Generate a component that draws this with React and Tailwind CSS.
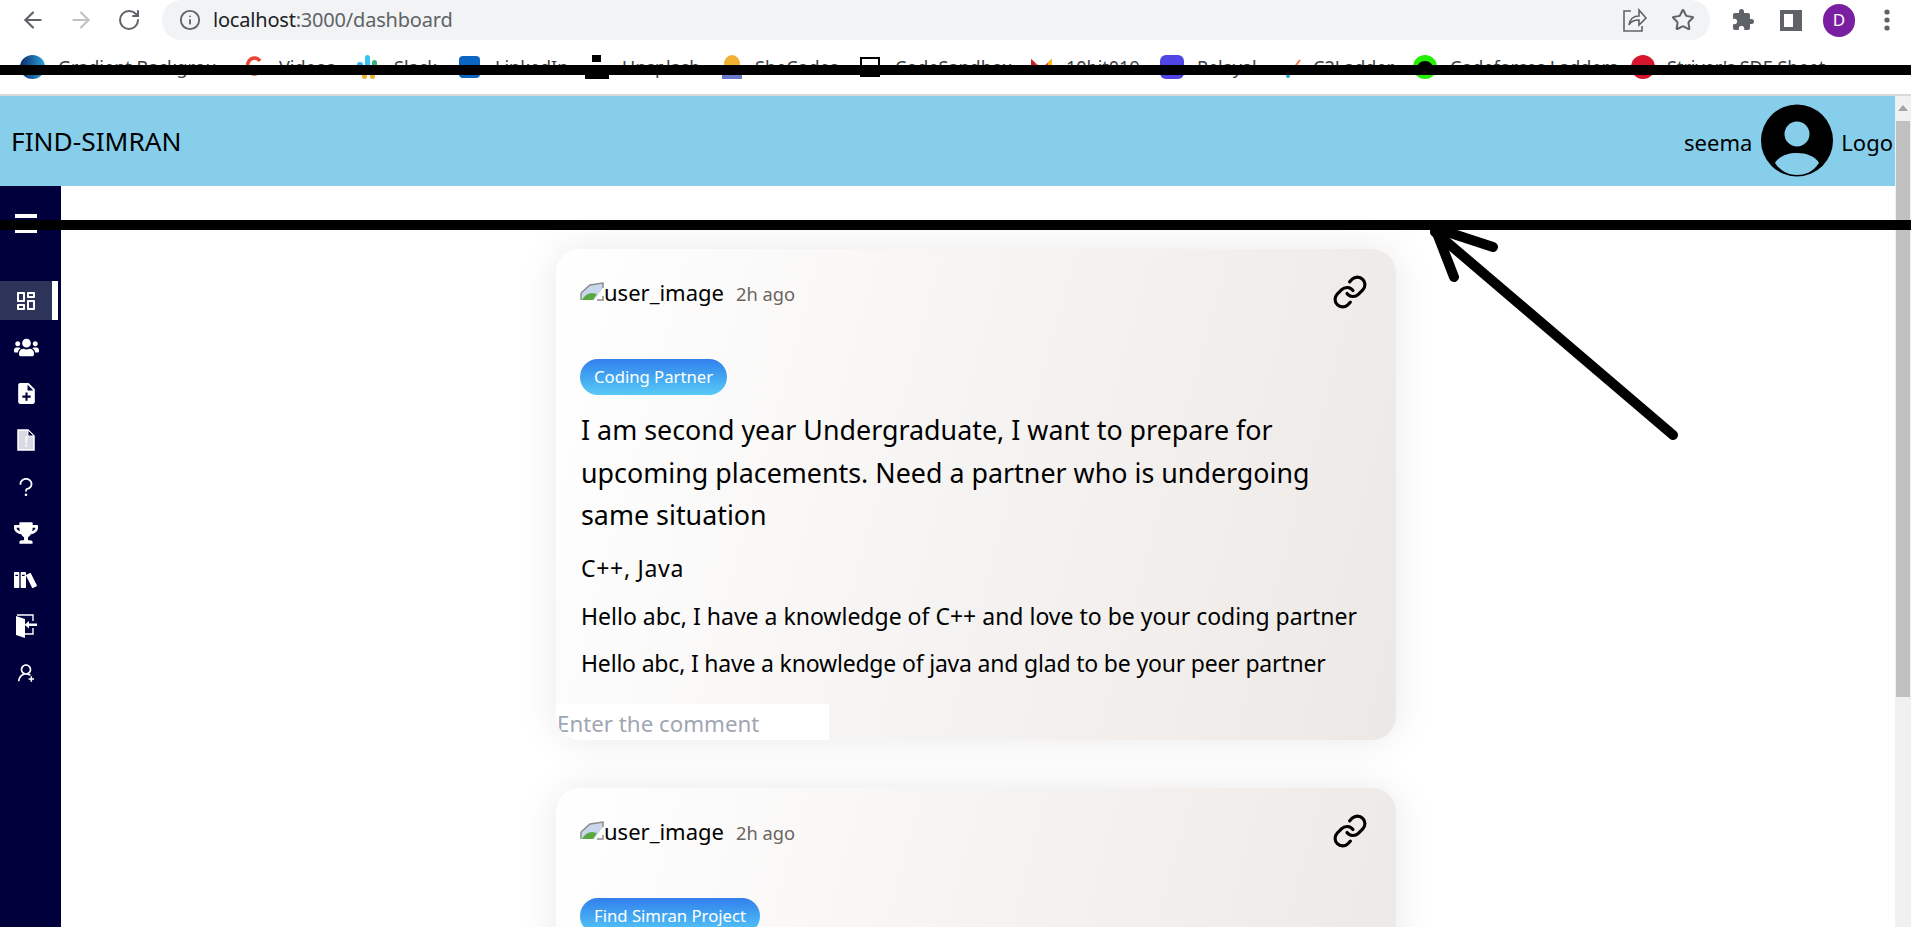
import React from "react";
import { ArrowLeft, ArrowRight, RotateCw, Info, Star, Link as LinkIcon } from "lucide-react";
import { MdExtension, MdNoteAdd } from "react-icons/md";
import { RiDashboardLine } from "react-icons/ri";
import { FaUsers, FaTrophy } from "react-icons/fa";
import { AiOutlineQuestion, AiOutlineUserAdd } from "react-icons/ai";
import { ImBooks } from "react-icons/im";

const BOOKMARKS = [
  { w: "w-[226px]", iw: "w-[38px]", label: "Gradient Backgrou", icon: <svg width="25" height="24"><defs><linearGradient id="g1" x1="0" x2="1"><stop offset="0" stopColor="#0b2a6b" /><stop offset="1" stopColor="#2aa3dc" /></linearGradient></defs><ellipse cx="12.5" cy="12" rx="12.5" ry="12" fill="url(#g1)" /></svg> },
  { w: "w-[111px]", iw: "w-[33px]", label: "Videos", icon: <svg width="16" height="24"><path d="M14 6 A7 8 0 1 0 15 14" stroke="#ea4335" strokeWidth="3.5" fill="none" /></svg> },
  { w: "w-[102px]", iw: "w-[37px]", label: "Slack", icon: <svg width="24" height="24"><rect x="8" y="0" width="5" height="12" rx="2.5" fill="#36c5f0" /><rect x="0" y="7" width="6" height="5" rx="2.5" fill="#2eb6f6" /><rect x="15" y="5" width="5" height="9" rx="2.5" fill="#2eb67d" /><rect x="5" y="18" width="5" height="6" rx="2.5" fill="#ecb22e" /><rect x="13" y="18" width="5" height="6" rx="2.5" fill="#ecb22e" /></svg> },
  { w: "w-[126px]", iw: "w-[36px]", label: "LinkedIn", icon: <div className="w-[21px] h-[22px] bg-[#0a66c2] rounded-sm"></div> },
  { w: "w-[137px]", iw: "w-[37px]", label: "Unsplash", icon: <svg width="24" height="24"><rect x="7" y="0" width="9" height="7" fill="#000" /><rect x="0" y="11" width="24" height="13" fill="#000" /></svg> },
  { w: "w-[138px]", iw: "w-[33px]", label: "SheCodes", icon: <svg width="20" height="24"><ellipse cx="10" cy="9" rx="8" ry="9" fill="#f0b030" /><rect x="0" y="18" width="20" height="6" fill="#6b77c8" /></svg> },
  { w: "w-[170px]", iw: "w-[35px]", label: "CodeSandbox", icon: <div className="w-[20px] h-[20px] border-2 border-black"></div> },
  { w: "w-[130px]", iw: "w-[36px]", label: "10bit019", icon: <svg width="23" height="24"><path d="M1 4 L11.5 13 L22 4 V20 H1 Z" fill="#ea4335" /><path d="M1 4 V20 H5 V8 Z" fill="#c5221f" /><path d="M22 4 V20 H18 V8 Z" fill="#fbbc04" /></svg> },
  { w: "w-[126px]", iw: "w-[37px]", label: "Pelayal", icon: <div className="w-[24px] h-[24px] bg-[#4f46e5] rounded-md"></div> },
  { w: "w-[127px]", iw: "w-[27px]", label: "C2Ladder", icon: <svg width="16" height="22"><path d="M2 20 L14 4" stroke="#ff7043" strokeWidth="2" /><circle cx="2" cy="20" r="2" fill="#29a8e0" /></svg> },
  { w: "w-[218px]", iw: "w-[37px]", label: "Codeforces Ladders", icon: <svg width="24" height="24"><ellipse cx="12" cy="12" rx="12" ry="12" fill="#22f000" /><ellipse cx="12" cy="13" rx="8" ry="7" fill="#000" /></svg> },
  { w: "w-[213px]", iw: "w-[36px]", label: "Striver's SDE Sheet", icon: <svg width="24" height="24"><ellipse cx="12" cy="12" rx="12" ry="12" fill="#d8152f" /></svg> },
];

const FileWarn = () => (
  <svg width="18" height="22" viewBox="0 0 18 22">
    <path d="M1 1 H11 L17 7 V21 H1 Z" fill="#d9d9e3" stroke="#ffffff" strokeWidth="1.5" />
    <path d="M11 1 L17 7 H11 Z" fill="#00003c" stroke="#ffffff" strokeWidth="1" />
    <rect x="8" y="7" width="2.4" height="7" fill="#f4f4f8" />
    <rect x="8" y="15.5" width="2.4" height="2.4" fill="#f4f4f8" />
  </svg>
);

const DoorIcon = () => (
  <svg width="21" height="24" viewBox="0 0 21 24">
    <path d="M0 2 L9 5 V24 L0 21 Z" fill="#ffffff" />
    <path d="M1 1 H17 V7 M17 14 V20 H9" fill="none" stroke="#ffffff" strokeWidth="1.4" />
    <path d="M21 9.6 H13 V7 L8.5 10.8 L13 14.6 V12 H21 Z" fill="#ffffff" />
  </svg>
);

const NAV = [
  { icon: <RiDashboardLine size={24} />, active: true },
  { icon: <FaUsers size={25} /> },
  { icon: <MdNoteAdd size={25} /> },
  { icon: <FileWarn /> },
  { icon: <AiOutlineQuestion size={24} /> },
  { icon: <FaTrophy size={24} /> },
  { icon: <ImBooks size={24} /> },
  { icon: <DoorIcon /> },
  { icon: <AiOutlineUserAdd size={22} /> },
];

function BrokenImage() {
  return (
    <svg width="24" height="20" viewBox="0 0 24 20" className="shrink-0">
      <path d="M1 11 L10 3 L23 1 V6 L14 18 H2 Z" fill="#c9d7ee" />
      <path d="M2 18 Q6 11 12 11 L17 12 L13 18 Z" fill="#5aa83f" />
      <path d="M1 11 L10 3 L23 1 V6 M23 14 V18 H17 M1 11 V18" stroke="#8b8b8b" strokeWidth="1.5" fill="none" />
    </svg>
  );
}

function Card({ tag, children, className }) {
  return (
    <div className={"w-[840px] shrink-0 rounded-[24px] overflow-hidden bg-[linear-gradient(105deg,#ffffff_0%,#ece8e5_100%)] shadow-[0_0_40px_rgba(0,0,0,0.09)] " + className}>
      <div className="flex items-center justify-between px-6 pt-[24px] h-[62px]">
        <div className="flex items-center">
          <div className="flex items-start h-[27px] overflow-hidden">
            <div className="pt-[3px]"><BrokenImage /></div>
            <span className="text-[22px] leading-[27px] text-black">user_image</span>
          </div>
          <span className="ml-3 mt-[3px] text-[18.3px] text-[#6b6461]">2h ago</span>
        </div>
        <LinkIcon size={36} strokeWidth={2.1} className="text-black mr-[4px] -mt-[1px]" />
      </div>
      <div className="px-6 pt-[48px]">
        <span className="inline-flex items-center h-[36px] px-[14px] rounded-full bg-gradient-to-b from-[#337fec] to-[#58caf6] text-white text-[16.7px]">{tag}</span>
      </div>
      {children}
    </div>
  );
}

export default function App() {
  return (
    <div className="relative w-[1911px] h-[927px] overflow-hidden bg-white font-['Noto_Sans','Open_Sans',sans-serif] text-black">
      {/* browser toolbar */}
      <div className="h-[40px] flex items-center bg-white">
        <div className="w-[162px] shrink-0 flex items-center pl-[20px] gap-[22px] text-[#5f6368]">
          <ArrowLeft size={26} strokeWidth={2} />
          <ArrowRight size={26} strokeWidth={2} className="text-[#c0c2c5]" />
          <RotateCw size={24} strokeWidth={2} className="ml-[1px]" />
        </div>
        <div className="w-[1548px] h-[40px] bg-[#f1f3f4] rounded-full flex items-center pl-[17px] pr-[15px]">
          <Info size={22} strokeWidth={2} className="text-[#5f6368]" />
          <span className="ml-[12px] text-[20px] tracking-[-0.2px] text-[#5f6368]"><span className="text-[#202124]">localhost</span>:3000/dashboard</span>
          <div className="ml-auto flex items-center gap-[24px] text-[#5f6368]">
            <svg width="24" height="24" viewBox="0 0 24 24" fill="none" stroke="currentColor" strokeWidth="1.6"><path d="M8 3 H1 V23 H19 V18" /><path d="M6 17 C7 10 11 8 16 8 V2 L23 10 L16 17 V12 C11 12 8 13 6 17 Z" /></svg>
            <Star size={24} strokeWidth={2} />
          </div>
        </div>
        <div className="flex-1 flex items-center pl-[21px] text-[#5f6368]">
          <MdExtension size={24} />
          <div className="ml-[25px] w-[22px] h-[21px] border-[4px] border-r-[9px] border-[#5f6368]"></div>
          <div className="ml-[21px] w-[32px] h-[33px] rounded-full bg-[#7b1fa2] text-white text-[17px] flex items-center justify-center">D</div>
          <svg width="6" height="24" viewBox="0 0 6 24" className="ml-[29px]" fill="currentColor"><circle cx="3" cy="4" r="2.6" /><circle cx="3" cy="12" r="2.6" /><circle cx="3" cy="20" r="2.6" /></svg>
        </div>
      </div>
      {/* bookmarks */}
      <div className="h-[56px] bg-white border-b-2 border-[#dadada] flex items-start pt-[15px] pl-[20px] text-[18px] leading-[24px] text-[#3c4043]">
        {BOOKMARKS.map((b) => (
          <div key={b.label} className={"flex items-center shrink-0 whitespace-nowrap " + b.w}>
            <div className={"shrink-0 flex " + b.iw}>{b.icon}</div>
            <span>{b.label}</span>
          </div>
        ))}
        <span className="text-[#5f6368]">»</span>
      </div>
      {/* page */}
      <div className="flex h-[831px]">
        <div className="flex-1 flex flex-col min-w-0">
          <header className="h-[90px] shrink-0 bg-[#87ceeb] flex items-center pl-[11px] pr-[2px]">
            <span className="text-[26.3px] mt-[2px]">FIND-SIMRAN</span>
            <div className="ml-auto flex items-center">
              <span className="text-[22px] mt-[2px]">seema</span>
              <svg width="72" height="73" viewBox="0 0 72 73" className="ml-[9px] -mt-[1px]">
                <circle cx="36" cy="36.5" r="36" fill="#000" />
                <circle cx="36" cy="30" r="12.5" fill="#87ceeb" />
                <path d="M14 59 C18 52 27 49 36 49 C45 49 54 52 58 59 C52 68 44 71 36 71 C28 71 20 68 14 59 Z" fill="#87ceeb" />
              </svg>
              <span className="ml-[8px] text-[22px] mt-[2px]">Logo</span>
            </div>
          </header>
          <div className="flex-1 flex min-h-0">
            <aside className="w-[61px] shrink-0 bg-[#00003c] flex flex-col text-white">
              <div className="h-[95px] shrink-0 flex flex-col items-start pl-[15px] pt-[28px]">
                <div className="w-[22px] h-[4px] bg-white"></div>
                <div className="w-[22px] h-[4px] bg-white mt-[11px]"></div>
              </div>
              <div className="flex flex-col gap-[7.5px]">
                {NAV.map((n, i) => (
                  <div key={i} className={"h-[39px] w-[58px] flex items-center " + (n.active ? "bg-[#2e3359] border-r-[6px] border-white" : "")}>
                    <div className="w-[52px] flex items-center justify-center">{n.icon}</div>
                  </div>
                ))}
              </div>
            </aside>
            <main className="flex-1 min-w-0 flex flex-col items-center pt-[63px] pr-[4px] overflow-hidden">
              <Card tag="Coding Partner" className="h-[491px]">
                <div className="pl-[25px] pr-6 pt-[14px]">
                  <p className="text-[26.8px] leading-[42.7px] tracking-[0.02px]">I am second year Undergraduate, I want to prepare for upcoming placements. Need a partner who is undergoing same situation</p>
                  <p className="mt-[8px] text-[23px] leading-[47.5px] tracking-[0.7px]">C++, Java</p>
                  <p className="text-[23px] leading-[47.5px]">Hello abc, I have a knowledge of C++ and love to be your coding partner</p>
                  <p className="text-[23px] leading-[47.5px] tracking-[-0.19px]">Hello abc, I have a knowledge of java and glad to be your peer partner</p>
                </div>
                <div className="mt-[16.5px] w-[273px] h-[36px] bg-white text-[22.3px] leading-[40px] text-[#a0a6b2] pl-[1px]">Enter the comment</div>
              </Card>
              <Card tag="Find Simran Project" className="mt-[48px] h-[300px]"></Card>
            </main>
          </div>
        </div>
        <div className="w-[16px] shrink-0 bg-[#f1f1f1] flex flex-col items-center pt-[9px]">
          <svg width="10" height="6" viewBox="0 0 10 6"><path d="M0 6 L5 0 L10 6 Z" fill="#a3a3a3" /></svg>
          <div className="mt-[10px] w-[14px] h-[576px] bg-[#c1c1c1]"></div>
        </div>
      </div>
      {/* marker annotations drawn over the screenshot */}
      <div className="absolute left-0 top-[65px] w-full h-[10px] bg-black"></div>
      <div className="absolute left-0 top-[220px] w-full h-[10px] bg-black"></div>
      <svg className="absolute left-[1420px] top-[220px]" width="270" height="230" viewBox="0 0 270 230" fill="none" stroke="#000" strokeWidth="10" strokeLinecap="round" strokeLinejoin="round">
        <path d="M253 215 L15 12" />
        <path d="M73 27 L15 8 L34 57" />
      </svg>
    </div>
  );
}
